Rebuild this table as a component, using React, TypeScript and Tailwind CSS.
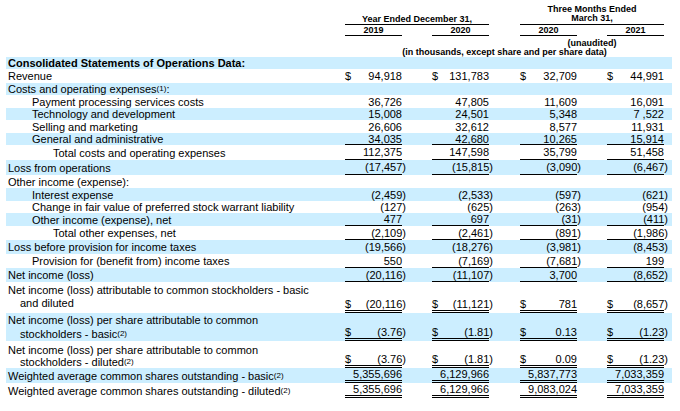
import type { ReactNode } from "react";

type Line = "single" | "double";

interface RowDef {
  label: ReactNode;
  h: string;
  indent?: number;
  bold?: boolean;
  vals?: string[];
  dollar?: boolean;
  line?: Line;
  // multi-line label: padding-top + line height
  multi?: string;
}

// column offsets after the label column
const GAPS = ["", "ml-[30px]", "ml-[31px]", "ml-[30px]"];
const INDENTS = ["pl-[2px]", "pl-[26px]", "pl-[47px]"];

function Sup({ children }: { children: ReactNode }) {
  return <span className="text-[8px] align-[2px]">{children}</span>;
}

const ROWS: RowDef[] = [
  { label: "Consolidated Statements of Operations Data:", h: "h-[12px]", bold: true },
  { label: "Revenue", h: "h-[14px]", vals: ["94,918", "131,783", "32,709", "44,991"], dollar: true },
  { label: <>Costs and operating expenses<Sup>(1)</Sup>:</>, h: "h-[12px]" },
  { label: "Payment processing services costs", h: "h-[13px]", indent: 1, vals: ["36,726", "47,805", "11,609", "16,091"] },
  { label: "Technology and development", h: "h-[12px]", indent: 1, vals: ["15,008", "24,501", "5,348", "7 ,522"] },
  { label: "Selling and marketing", h: "h-[13px]", indent: 1, vals: ["26,606", "32,612", "8,577", "11,931"] },
  { label: "General and administrative", h: "h-[12px]", indent: 1, vals: ["34,035", "42,680", "10,265", "15,914"], line: "single" },
  { label: "Total costs and operating expenses", h: "h-[15px]", indent: 2, vals: ["112,375", "147,598", "35,799", "51,458"], line: "single" },
  { label: "Loss from operations", h: "h-[15px]", vals: ["(17,457)", "(15,815)", "(3,090)", "(6,467)"], line: "single" },
  { label: "Other income (expense):", h: "h-[13px]" },
  { label: "Interest expense", h: "h-[13px]", indent: 1, vals: ["(2,459)", "(2,533)", "(597)", "(621)"] },
  { label: "Change in fair value of preferred stock warrant liability", h: "h-[12px]", indent: 1, vals: ["(127)", "(625)", "(263)", "(954)"] },
  { label: "Other income (expense), net", h: "h-[13px]", indent: 1, vals: ["477", "697", "(31)", "(411)"], line: "single" },
  { label: "Total other expenses, net", h: "h-[14px]", indent: 2, vals: ["(2,109)", "(2,461)", "(891)", "(1,986)"], line: "single" },
  { label: "Loss before provision for income taxes", h: "h-[14px]", vals: ["(19,566)", "(18,276)", "(3,981)", "(8,453)"] },
  { label: "Provision for (benefit from) income taxes", h: "h-[14px]", indent: 1, vals: ["550", "(7,169)", "(7,681)", "199"], line: "single" },
  { label: "Net income (loss)", h: "h-[14px]", vals: ["(20,116)", "(11,107)", "3,700", "(8,652)"], line: "single" },
  {
    label: <>Net income (loss) attributable to common stockholders - basic<span className="block pl-[12px]">and diluted</span></>,
    h: "h-[31px]", multi: "pt-[2px] leading-[13px]", vals: ["(20,116)", "(11,121)", "781", "(8,657)"], dollar: true, line: "double",
  },
  {
    label: <>Net income (loss) per share attributable to common<span className="block pl-[12px]">stockholders - basic<Sup>(2)</Sup></span></>,
    h: "h-[28px]", multi: "pt-[1px] leading-[13px]", vals: ["(3.76)", "(1.81)", "0.13", "(1.23)"], dollar: true, line: "double",
  },
  {
    label: <>Net income (loss) per share attributable to common<span className="block pl-[12px]">stockholders - diluted<Sup>(2)</Sup></span></>,
    h: "h-[27px]", multi: "pt-[3px] leading-[12px]", vals: ["(3.76)", "(1.81)", "0.09", "(1.23)"], dollar: true, line: "double",
  },
  { label: <>Weighted average common shares outstanding - basic<Sup>(2)</Sup></>, h: "h-[15px]", vals: ["5,355,696", "6,129,966", "5,837,773", "7,033,359"], line: "double" },
  { label: <>Weighted average common shares outstanding - diluted<Sup>(2)</Sup></>, h: "h-[15px]", vals: ["5,355,696", "6,129,966", "9,083,024", "7,033,359"], line: "double" },
];

function Num({ v }: { v: string }) {
  // closing paren hangs past the column edge, like the filing
  if (v.endsWith(")")) {
    return (
      <span className="whitespace-pre">
        {v.slice(0, -1)}
        <span className="-mr-[4px]">)</span>
      </span>
    );
  }
  return <span className="whitespace-pre">{v}</span>;
}

function Row({ row, shade }: { row: RowDef; shade: boolean }) {
  const lineCls =
    row.line === "single"
      ? "border-b border-black"
      : row.line === "double"
        ? "border-b-[3px] border-double border-black"
        : "";
  const align = row.multi ? "items-end" : "items-center";
  return (
    <div className={`flex w-[666px] ${row.h} ${shade ? "bg-[#cceeff]" : ""}`}>
      <div
        className={`w-[339px] shrink-0 ${INDENTS[row.indent ?? 0]} ${row.bold ? "font-bold" : ""} ${
          row.multi ? row.multi : "flex items-center leading-[12px]"
        }`}
      >
        {row.multi ? row.label : <span>{row.label}</span>}
      </div>
      {row.vals &&
        row.vals.map((v, i) => (
          <div key={i} className={`flex w-[57px] shrink-0 justify-between leading-[12px] ${align} ${GAPS[i]} ${lineCls}`}>
            <span>{row.dollar ? "$" : ""}</span>
            <Num v={v} />
          </div>
        ))}
    </div>
  );
}

export default function App() {
  const years = ["2019", "2020", "2020", "2021"];
  return (
    <div className="h-[411px] w-[680px] overflow-hidden bg-white font-['Liberation_Sans',Arial,sans-serif] text-black">
      {/* Column headers */}
      <div className="ml-[345px] h-[57px] w-[319px] text-[9px] font-bold">
        <div className="flex h-[25px] items-end">
          <div className="w-[144px] border-b border-black text-center leading-[9px]">Year Ended December 31,</div>
          <div className="ml-[31px] w-[144px] border-b border-black pb-[1px] text-center leading-[9px]">
            Three Months Ended
            <br />
            March 31,
          </div>
        </div>
        <div className="flex h-[11px]">
          {years.map((y, i) => (
            <div key={i} className={`flex w-[57px] items-end justify-center border-b border-black leading-[9px] ${GAPS[i]}`}>
              {y}
            </div>
          ))}
        </div>
        <div className="mt-[2px] flex h-[10px] leading-[10px]">
          <div className="ml-[175px] w-[144px] text-center">(unaudited)</div>
        </div>
        <div className="h-[9px] text-center leading-[9px]">(in thousands, except share and per share data)</div>
      </div>

      {/* Statement rows */}
      <div className="ml-[6px] text-[11px]">
        {ROWS.map((r, i) => (
          <Row key={i} row={r} shade={i % 2 === 0} />
        ))}
      </div>
    </div>
  );
}
